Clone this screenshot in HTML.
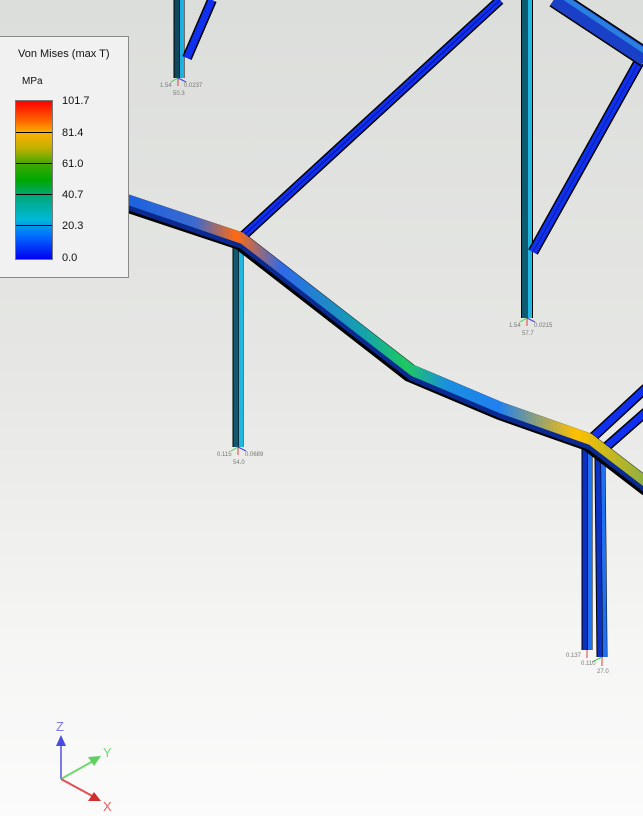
<!DOCTYPE html>
<html><head><meta charset="utf-8"><style>
html,body{margin:0;padding:0;width:643px;height:816px;overflow:hidden}
body{background:linear-gradient(#dcdedb 0%,#e6e7e4 45%,#f6f6f5 80%,#fbfbfb 100%);font-family:"Liberation Sans",sans-serif;position:relative}
svg{position:absolute;left:0;top:0}
.leg{position:absolute;left:-1px;top:36px;width:128px;height:240px;background:#f1f1f1;border:1px solid #8a8a8a;font-size:11px;color:#111}
.bar{position:absolute;left:15px;top:63px;width:36px;height:158px;border:1px solid #777;background:linear-gradient(#ff0000 0%,#ff6000 12%,#ffb000 20%,#c0b000 30%,#40a800 40%,#00a800 50%,#00a878 60%,#00b8d8 75%,#0070ff 85%,#0000f0 100%)}
.bar i{position:absolute;left:0;width:36px;height:1px;background:#000}
.lbl{position:absolute;left:62px;font-size:11px}
.n{font-size:6px;fill:#777;font-family:"Liberation Sans",sans-serif}
</style></head><body>
<svg width="643" height="816" viewBox="0 0 643 816">
<defs>
<linearGradient id="mg" gradientUnits="userSpaceOnUse" x1="128" y1="0" x2="643" y2="0">
<stop offset="0" stop-color="#1b62e0"/><stop offset="0.13" stop-color="#3a6ad0"/><stop offset="0.21" stop-color="#ff6a10"/><stop offset="0.3" stop-color="#2d6ae8"/><stop offset="0.45" stop-color="#14a0b0"/><stop offset="0.54" stop-color="#1ec860"/><stop offset="0.62" stop-color="#1a8ee0"/><stop offset="0.72" stop-color="#2080f0"/><stop offset="0.87" stop-color="#ffc000"/><stop offset="1" stop-color="#90b040"/>
</linearGradient>
</defs>
<g fill="none" stroke-linejoin="miter">
<!-- blue diagonal top -->
<path d="M243 236 L500 0" stroke="#000" stroke-width="10"/><path d="M243 236 L500 0" stroke="#1030f0" stroke-width="7"/><path d="M243 236 L500 0" stroke="#0010a0" stroke-width="1"/>
<!-- top-left column -->
<path d="M179 0 L179 78" stroke="#000" stroke-width="11"/><path d="M177 0 L177 78" stroke="#104860" stroke-width="5"/><path d="M182 0 L182 78" stroke="#20b0e0" stroke-width="4"/>
<path d="M187 58 L212 0" stroke="#000" stroke-width="10"/><path d="M187 58 L212 0" stroke="#1030f0" stroke-width="7"/>
<!-- right column -->
<path d="M527 0 L527 318" stroke="#000" stroke-width="12"/><path d="M525 0 L525 318" stroke="#0f5a70" stroke-width="6"/><path d="M530 0 L530 318" stroke="#20b8e0" stroke-width="4"/>
<path d="M533 252 L639 62" stroke="#000" stroke-width="11"/><path d="M533 252 L639 62" stroke="#1030f0" stroke-width="8"/><path d="M533 252 L639 62" stroke="#0a20a0" stroke-width="1"/>
<!-- upper right beam -->
<path d="M555 -2 L646 58" stroke="#000" stroke-width="20"/><path d="M555 -2 L646 58" stroke="#1a40c8" stroke-width="17"/><path d="M559 -6 L646 52" stroke="#2a80e0" stroke-width="5"/>
<!-- right blue diagonals -->
<path d="M592 438 L646 388" stroke="#000" stroke-width="10"/><path d="M592 438 L646 388" stroke="#1030f0" stroke-width="7"/>
<path d="M605 448 L646 412" stroke="#000" stroke-width="10"/><path d="M605 448 L646 412" stroke="#1030f0" stroke-width="7"/>
<!-- middle column -->
<path d="M238 246 L238 447" stroke="#000" stroke-width="11"/><path d="M236 246 L236 447" stroke="#0f5a70" stroke-width="5"/><path d="M241 246 L241 447" stroke="#20b8e0" stroke-width="4"/>
<!-- right columns -->
<path d="M587 448 L587 650" stroke="#000" stroke-width="11"/><path d="M585 448 L585 650" stroke="#0c30c0" stroke-width="5"/><path d="M590 448 L590 650" stroke="#2070f0" stroke-width="4"/>
<path d="M600 458 L602 657" stroke="#000" stroke-width="11"/><path d="M598 458 L600 657" stroke="#0c30c0" stroke-width="5"/><path d="M603 458 L605 657" stroke="#2070f0" stroke-width="4"/>
<!-- main beam -->
<path d="M120 201 L240 241 L410 373 L500 411 L588 442 L648 488" stroke="#000" stroke-width="18"/>
<path d="M120 199 L240 239 L410 371 L500 409 L588 440 L648 486" stroke="url(#mg)" stroke-width="14"/>
<path d="M120 205 L240 246 L410 378 L500 416 L588 447 L648 493" stroke="#0a2a90" stroke-width="5"/>
<path d="M120 208 L240 249 L410 381 L500 419 L588 450 L648 496" stroke="#000" stroke-width="1"/>
</g>
<!-- supports -->
<g stroke-width="1">
<line x1="178" y1="78" x2="178" y2="86" stroke="#e04040"/><line x1="178" y1="78" x2="171" y2="82" stroke="#40d040"/><line x1="178" y1="78" x2="186" y2="82" stroke="#4040e0"/>
<line x1="238" y1="447" x2="238" y2="455" stroke="#e04040"/><line x1="238" y1="447" x2="231" y2="451" stroke="#40d040"/><line x1="238" y1="447" x2="246" y2="451" stroke="#4040e0"/>
<line x1="527" y1="318" x2="527" y2="326" stroke="#e04040"/><line x1="527" y1="318" x2="520" y2="322" stroke="#40d040"/><line x1="527" y1="318" x2="535" y2="322" stroke="#4040e0"/>
<line x1="587" y1="650" x2="587" y2="658" stroke="#e04040"/><line x1="602" y1="657" x2="602" y2="666" stroke="#e04040"/><line x1="602" y1="657" x2="592" y2="662" stroke="#40d040"/>
</g>
<text class="n" x="160" y="87">1.54</text><text class="n" x="184" y="87">0.0237</text><text class="n" x="173" y="95">50.3</text>
<text class="n" x="217" y="456">0.115</text><text class="n" x="245" y="456">0.0689</text><text class="n" x="233" y="464">54.0</text>
<text class="n" x="509" y="327">1.54</text><text class="n" x="534" y="327">0.0215</text><text class="n" x="522" y="335">57.7</text>
<text class="n" x="566" y="657">0.137</text><text class="n" x="581" y="665">0.110</text><text class="n" x="597" y="673">27.0</text>
<!-- triad -->
<g stroke-width="2">
<line x1="61" y1="779" x2="61" y2="737" stroke="#7a7ae8"/><polygon points="56,746 66,746 61,735" fill="#4a4ae0"/>
<line x1="61" y1="779" x2="95" y2="760" stroke="#70d870"/><polygon points="88,757 94,766 101,756" fill="#60d060"/>
<line x1="61" y1="779" x2="96" y2="798" stroke="#e05050"/><polygon points="88,801 94,792 101,801" fill="#d03030"/>
</g>
<text x="56" y="731" fill="#7a7ae8" font-size="13" font-family="Liberation Sans">Z</text>
<text x="103" y="757" fill="#70d870" font-size="13" font-family="Liberation Sans">Y</text>
<text x="103" y="811" fill="#e06060" font-size="13" font-family="Liberation Sans">X</text>
</svg>
<div class="leg">
<div style="position:absolute;left:18px;top:11px">Von Mises (max T)</div>
<div style="position:absolute;left:22px;top:39px;font-size:10px">MPa</div>
<div class="bar"><i style="top:31px"></i><i style="top:62px"></i><i style="top:93px"></i><i style="top:124px"></i></div>
<div class="lbl" style="top:58px">101.7</div>
<div class="lbl" style="top:90px">81.4</div>
<div class="lbl" style="top:121px">61.0</div>
<div class="lbl" style="top:152px">40.7</div>
<div class="lbl" style="top:183px">20.3</div>
<div class="lbl" style="top:215px">0.0</div>
</div>
</body></html>
